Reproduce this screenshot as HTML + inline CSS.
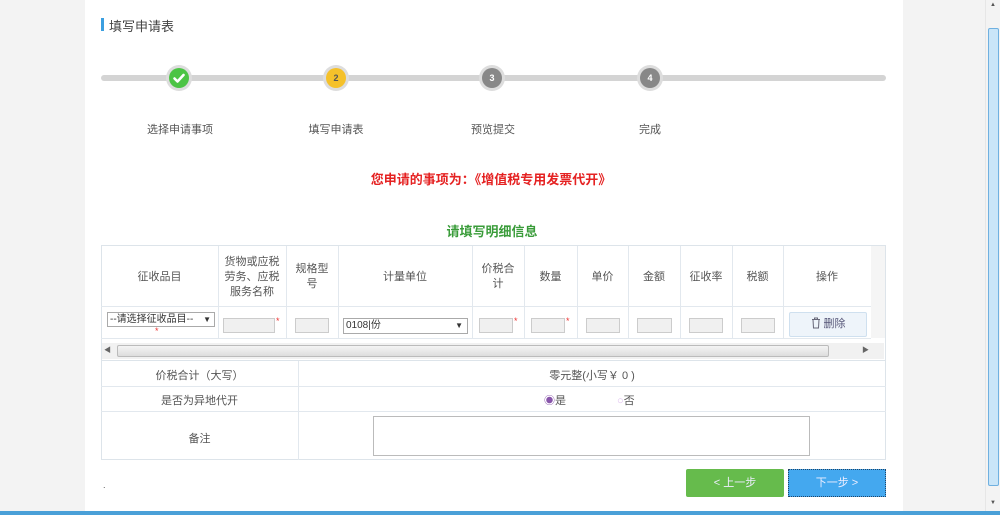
<!DOCTYPE html>
<html><head><meta charset="utf-8"><style>
*{box-sizing:border-box;margin:0;padding:0}
body{width:1000px;height:515px;background:#f3f3f3;position:relative;overflow:hidden;font-family:"Liberation Sans","Noto Sans CJK SC",sans-serif;color:#555;font-size:11px}
.a{position:absolute}
.panel{left:85px;top:0;width:818px;height:511px;background:#fff}
.c{text-align:center}
.circ{width:26px;height:26px;border-radius:50%;background:#ddd;top:65px}
.circ i{position:absolute;left:3px;top:3px;width:20px;height:20px;border-radius:50%;color:#fff;font-style:normal;font-size:9px;font-weight:bold;line-height:20px;text-align:center}
.lbl{top:121px;width:120px;text-align:center;font-size:11px;color:#555}
.vl{background:#e2e8ee;width:1px}
.hl{background:#e2e8ee;height:1px}
.th{top:248px;height:58px;display:flex;align-items:center;justify-content:center;text-align:center;font-size:11px;line-height:15px;color:#555}
.in{height:15px;border:1px solid #ccc;background:#f0f0f0;top:318px}
.star{color:#e33;font-size:9px}
</style></head><body>
<div class="a panel"></div>
<div class="a" style="left:101px;top:18px;width:3px;height:13px;background:#3b9fe0"></div>
<div class="a" style="left:109px;top:16px;font-size:13px;color:#444">填写申请表</div>
<div class="a" style="left:101px;top:75px;width:785px;height:6px;border-radius:3px;background:#d4d4d4"></div>
<div class="a circ" style="left:166px"><i style="background:#4cc445"><svg width="20" height="20" viewBox="0 0 20 20"><path d="M5.5 10.5 L8.5 13.5 L14.5 7" stroke="#fff" stroke-width="2.6" fill="none" stroke-linecap="round" stroke-linejoin="round"/></svg></i></div>
<div class="a circ" style="left:323px"><i style="background:#f5c12a;color:#555">2</i></div>
<div class="a circ" style="left:479px"><i style="background:#888">3</i></div>
<div class="a circ" style="left:637px"><i style="background:#888">4</i></div>
<div class="a lbl" style="left:120px">选择申请事项</div>
<div class="a lbl" style="left:276px">填写申请表</div>
<div class="a lbl" style="left:433px">预览提交</div>
<div class="a lbl" style="left:590px">完成</div>
<div class="a c" style="left:291px;width:400px;top:169px;font-size:13px;font-weight:bold;color:#e52222">您申请的事项为：《增值税专用发票代开》</div>
<div class="a c" style="left:392px;width:200px;top:221px;font-size:13px;font-weight:bold;color:#3a9c3a">请填写明细信息</div>
<div class="a" style="left:101px;top:245px;width:785px;height:116px;border:1px solid #dde4ea;background:#fff"></div>
<div class="a hl" style="left:101px;top:306px;width:770px"></div>
<div class="a hl" style="left:101px;top:338px;width:770px"></div>
<div class="a vl" style="left:218px;top:246px;height:92px"></div>
<div class="a vl" style="left:286px;top:246px;height:92px"></div>
<div class="a vl" style="left:338px;top:246px;height:92px"></div>
<div class="a vl" style="left:472px;top:246px;height:92px"></div>
<div class="a vl" style="left:524px;top:246px;height:92px"></div>
<div class="a vl" style="left:577px;top:246px;height:92px"></div>
<div class="a vl" style="left:628px;top:246px;height:92px"></div>
<div class="a vl" style="left:680px;top:246px;height:92px"></div>
<div class="a vl" style="left:732px;top:246px;height:92px"></div>
<div class="a vl" style="left:783px;top:246px;height:92px"></div>
<div class="a vl" style="left:871px;top:246px;height:92px"></div>
<div class="a th" style="left:101px;width:117px">征收品目</div>
<div class="a th" style="left:218px;width:68px">货物或应税<br>劳务、应税<br>服务名称</div>
<div class="a th" style="left:286px;width:52px">规格型<br>号</div>
<div class="a th" style="left:338px;width:134px">计量单位</div>
<div class="a th" style="left:472px;width:52px">价税合<br>计</div>
<div class="a th" style="left:524px;width:53px">数量</div>
<div class="a th" style="left:577px;width:51px">单价</div>
<div class="a th" style="left:628px;width:52px">金额</div>
<div class="a th" style="left:680px;width:52px">征收率</div>
<div class="a th" style="left:732px;width:51px">税额</div>
<div class="a th" style="left:783px;width:88px">操作</div>
<div class="a" style="left:871px;top:246px;width:14px;height:92px;background:#f5f5f5"></div>
<div class="a" style="left:107px;top:312px;width:108px;height:15px;border:1px solid #aaa;font-size:10px;color:#333;padding-left:2px;line-height:13px">--请选择征收品目-- <span style="float:right;margin-right:3px;font-size:8px">▼</span></div>
<div class="a star" style="left:155px;top:326px">*</div>
<div class="a in" style="left:223px;width:52px"></div><div class="a star" style="left:276px;top:316px">*</div>
<div class="a in" style="left:295px;width:34px"></div>
<div class="a" style="left:343px;top:318px;width:125px;height:16px;border:1px solid #aaa;font-size:10px;color:#333;padding-left:2px;line-height:14px">0108|份<span style="float:right;margin-right:4px;font-size:8px">▼</span></div>
<div class="a in" style="left:479px;width:34px"></div><div class="a star" style="left:514px;top:316px">*</div>
<div class="a in" style="left:531px;width:34px"></div><div class="a star" style="left:566px;top:316px">*</div>
<div class="a in" style="left:586px;width:34px"></div>
<div class="a in" style="left:637px;width:35px"></div>
<div class="a in" style="left:689px;width:34px"></div>
<div class="a in" style="left:741px;width:34px"></div>
<div class="a c" style="left:789px;top:312px;width:78px;height:25px;border:1px solid #cfe0ef;background:#eef4fa;border-radius:2px;line-height:23px;font-size:11px;color:#557"><svg width="10" height="12" viewBox="0 0 10 12" style="vertical-align:-2px;margin-right:3px"><path d="M1 2.5 H9 M3.5 2.5 V1 H6.5 V2.5 M2 2.5 L2.5 11 H7.5 L8 2.5" stroke="#667" stroke-width="1" fill="none"/></svg>删除</div>
<div class="a" style="left:102px;top:343px;width:782px;height:16px;background:#f1f1f1"></div>
<div class="a" style="left:117px;top:345px;width:712px;height:12px;border:1px solid #bbb;border-radius:2px;background:linear-gradient(#f4f4f4,#ddd)"></div>
<div class="a" style="left:104px;top:345px;font-size:7px;color:#666">◀</div>
<div class="a" style="left:862px;top:345px;font-size:7px;color:#666">▶</div>
<div class="a" style="left:101px;top:361px;width:785px;height:99px;border:1px solid #dde4ea;border-top:none"></div>
<div class="a hl" style="left:101px;top:386px;width:785px"></div>
<div class="a hl" style="left:101px;top:411px;width:785px"></div>
<div class="a vl" style="left:298px;top:361px;height:99px"></div>
<div class="a c" style="left:101px;width:197px;top:367px">价税合计（大写）</div>
<div class="a c" style="left:298px;width:588px;top:367px">零元整(小写￥ 0 )</div>
<div class="a c" style="left:101px;width:197px;top:392px">是否为异地代开</div>
<div class="a" style="left:544px;top:392px"><span style="color:#85a">◉</span>是</div>
<div class="a" style="left:617px;top:392px"><span style="color:#dbe">○</span>否</div>
<div class="a c" style="left:101px;width:197px;top:430px">备注</div>
<div class="a" style="left:373px;top:416px;width:437px;height:40px;border:1px solid #bbb"></div>
<div class="a" style="left:103px;top:480px;font-size:9px">.</div>
<div class="a c" style="left:686px;top:469px;width:98px;height:28px;background:#66bb4c;border-radius:2px;color:#eef;line-height:28px">&lt; 上一步</div>
<div class="a c" style="left:788px;top:469px;width:98px;height:28px;background:#44a8ef;border:1px dotted #246;color:#eef;line-height:26px">下一步 &gt;</div>
<div class="a" style="left:0;top:511px;width:1000px;height:4px;background:#4aa0d8"></div>
<div class="a" style="left:985px;top:0;width:15px;height:511px;background:#f3f3f3;border-left:1px solid #e6e6e6"></div>
<div class="a" style="left:988px;top:28px;width:11px;height:458px;background:#c9e5f8;border:1px solid #6fb0e0;border-radius:2px"></div>
<div class="a" style="left:990px;top:2px;font-size:6px;color:#555">▲</div>
<div class="a" style="left:990px;top:500px;font-size:6px;color:#555">▼</div>
</body></html>
